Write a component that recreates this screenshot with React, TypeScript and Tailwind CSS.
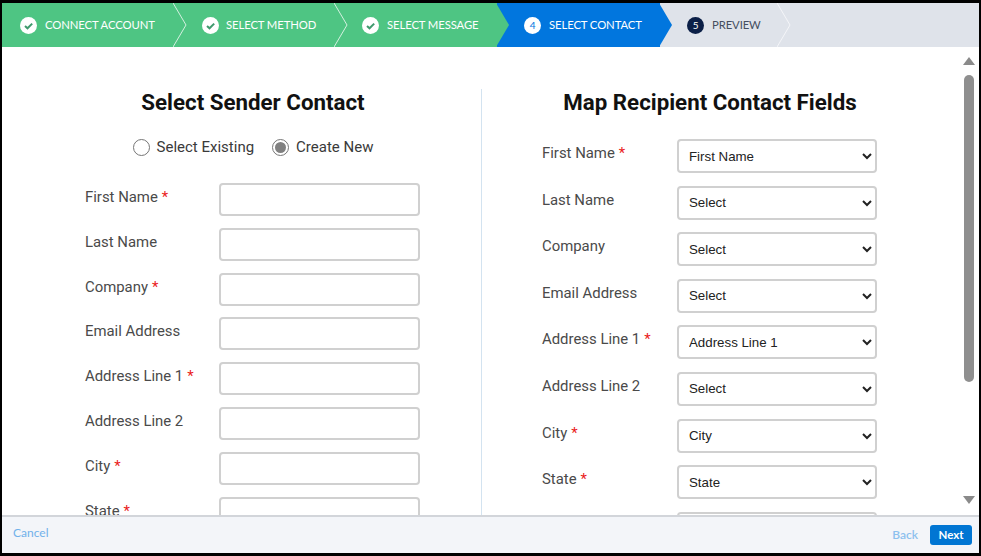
function Check() {
  return (
    <svg width="17" height="17" viewBox="0 0 17 17" className="shrink-0">
      <circle cx="8.5" cy="8.5" r="8.5" fill="#ffffff" />
      <path d="M5 9 L7.5 11.3 L12.2 6.6" fill="none" stroke="#3f9a6d" strokeWidth="2" />
    </svg>
  );
}

function Chevron({ color, fill }: { color: string; fill?: string }) {
  return (
    <svg width="14" height="44" viewBox="0 0 14 44" className="absolute top-0 right-[-13px] z-10">
      {fill && <path d="M0 0 L13 22 L0 44 Z" fill={fill} />}
      {color !== "none" && <path d="M0 0 L13 22 L0 44" fill="none" stroke={color} strokeWidth="1" />}
    </svg>
  );
}

const senderFields = [
  ["First Name", true],
  ["Last Name", false],
  ["Company", true],
  ["Email Address", false],
  ["Address Line 1", true],
  ["Address Line 2", false],
  ["City", true],
  ["State", true],
] as const;

const recipientFields = [
  ["First Name", true, "First Name"],
  ["Last Name", false, "Select"],
  ["Company", false, "Select"],
  ["Email Address", false, "Select"],
  ["Address Line 1", true, "Address Line 1"],
  ["Address Line 2", false, "Select"],
  ["City", true, "City"],
  ["State", true, "State"],
] as const;

export default function App() {
  return (
    <div className="w-[981px] h-[556px] box-border border-t-[3px] border-b-[3px] border-l-[2px] border-r-[2px] border-black bg-white flex flex-col overflow-hidden font-['Roboto',sans-serif]">
      <div className="h-[44px] shrink-0 flex bg-[#dfe3ea] font-['Lato',sans-serif] text-[11.3px] tracking-[-0.1px]">
        <div className="relative w-[172px] bg-[#4ec583] text-white flex items-center pl-[18px] gap-[8px]">
          <Check />
          <span>CONNECT ACCOUNT</span>
          <Chevron color="#d5f0e0" fill="#4ec583" />
        </div>
        <div className="relative w-[161px] bg-[#4ec583] text-white flex items-center pl-[28px] gap-[7px]">
          <Check />
          <span>SELECT METHOD</span>
          <Chevron color="#d5f0e0" fill="#4ec583" />
        </div>
        <div className="relative w-[162px] bg-[#4ec583] text-white flex items-center pl-[27px] gap-[8px]">
          <Check />
          <span>SELECT MESSAGE</span>
          <Chevron color="none" fill="#4ec583" />
        </div>
        <div className="relative w-[163px] bg-[#0176de] text-white flex items-center pl-[27px] gap-[8px]">
          <span className="w-[17px] h-[17px] rounded-full bg-white text-[#0176de] text-[10px] flex items-center justify-center shrink-0">4</span>
          <span>SELECT CONTACT</span>
          <Chevron color="none" fill="#0176de" />
        </div>
        <div className="relative w-[118px] text-[#444e60] flex items-center pl-[27px] gap-[8px]">
          <span className="w-[17px] h-[17px] rounded-full bg-[#0b1f47] text-white text-[10px] flex items-center justify-center shrink-0">5</span>
          <span>PREVIEW</span>
          <Chevron color="#f4f5f8" />
        </div>
      </div>

      <div className="flex-1 min-h-0 flex overflow-hidden">
        <div className="w-[480px] shrink-0 pt-[42px] overflow-hidden">
          <div className="pl-[23px] border-r border-[#d3e3f0] h-[500px]">
            <h2 className="text-[22.3px] leading-[26px] font-bold text-[#111111] text-center">Select Sender Contact</h2>
            <div className="mt-[22px] h-[20px] flex items-center justify-center gap-[18px] text-[15px] text-[#3a3a3a]">
              <label className="flex items-center gap-[7px]">
                <span className="w-[17px] h-[17px] rounded-full border border-[#767676] bg-white" />
                Select Existing
              </label>
              <label className="flex items-center gap-[7px]">
                <span className="w-[17px] h-[17px] rounded-full border border-[#767676] bg-white flex items-center justify-center">
                  <span className="w-[11px] h-[11px] rounded-full bg-[#808080]" />
                </span>
                Create New
              </label>
            </div>
            <div className="mt-[26px] ml-[60px] flex flex-col gap-[11.8px]">
              {senderFields.map(([label, req]) => (
                <div key={label} className="flex h-[33px]">
                  <div className="w-[134px] shrink-0 text-[14.9px] leading-[28px] text-[#4a4a4a]">
                    {label}
                    {req && <span className="text-[#ea1c1c] ml-[4px]">*</span>}
                  </div>
                  <input className="w-[201px] h-[33px] bg-white border-2 border-[#d0d0d0] rounded-[4px]" />
                </div>
              ))}
            </div>
          </div>
        </div>

        <div className="w-[456px] shrink-0 pt-[42px] overflow-hidden">
          <h2 className="text-[22.3px] leading-[26px] font-bold text-[#111111] text-center">Map Recipient Contact Fields</h2>
          <div className="mt-[24px] ml-[60px] flex flex-col gap-[12.6px]">
            {recipientFields.map(([label, req, value]) => (
              <div key={label} className="flex h-[34px]">
                <div className="w-[135px] shrink-0 text-[14.9px] leading-[28px] text-[#4a4a4a]">
                  {label}
                  {req && <span className="text-[#ea1c1c] ml-[4px]">*</span>}
                </div>
                <select
                  defaultValue={value}
                  className="w-[200px] h-[34px] bg-white border-2 border-[#d0d0d0] rounded-[4px] pl-[6px] pr-[5px] text-[13.3px] text-[#222222] font-['Liberation_Sans',sans-serif]"
                >
                  <option>{value}</option>
                </select>
              </div>
            ))}
            <div className="h-[34px] ml-[135px] w-[200px] bg-white border-2 border-[#d0d0d0] rounded-[4px]" />
          </div>
        </div>

        <div className="flex-1" />
        <div className="w-[14px] mr-[3px] shrink-0 flex flex-col items-center pt-[10px]">
          <svg width="12" height="8" viewBox="0 0 12 8" className="shrink-0"><path d="M6 0 L12 8 L0 8 Z" fill="#8a8a8a" /></svg>
          <div className="w-[10px] h-[307px] mt-[10px] bg-[#8f8f8f] rounded-[5px] shrink-0" />
          <svg width="12" height="8" viewBox="0 0 12 8" className="shrink-0 mt-[114px]"><path d="M0 0 L12 0 L6 8 Z" fill="#8a8a8a" /></svg>
        </div>
      </div>

      <div className="h-[38px] shrink-0 bg-[#f3f5f9] border-t-2 border-[#d2d5da] flex items-center px-[11px] text-[12px] font-['Lato',sans-serif]">
        <span className="text-[#71b1ea] mb-[4px]">Cancel</span>
        <span className="ml-auto text-[#8cc0ee] font-semibold">Back</span>
        <button className="ml-[12px] mr-[-4px] w-[42px] h-[20px] rounded-[3px] bg-[#0176d3] text-white font-bold text-[11.5px] flex items-center justify-center">Next</button>
      </div>
    </div>
  );
}
